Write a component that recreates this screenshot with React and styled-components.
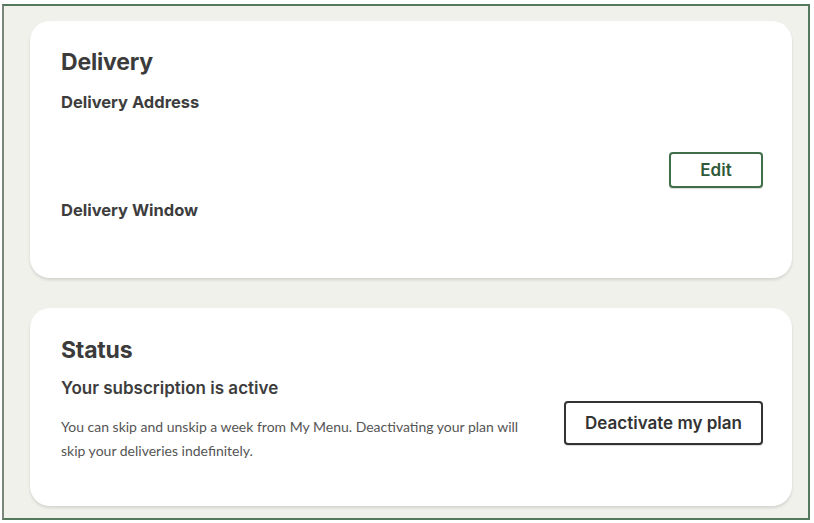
import React from "react";
import styled, { createGlobalStyle } from "styled-components";

const GlobalStyle = createGlobalStyle`
  html, body {
    margin: 0;
    padding: 0;
    background: #ffffff;
  }
  * {
    box-sizing: border-box;
  }
`;

const Frame = styled.div`
  width: 808px;
  height: 516px;
  margin: 4px 0 0 2px;
  border: 2px solid #55795c;
  border-left-color: #7b867d;
  background: #f1f1ec;
  padding: 15px 16px 12px 26px;
  display: flex;
  flex-direction: column;
  gap: 30px;
`;

const Card = styled.section`
  background: #ffffff;
  border-radius: 20px;
  box-shadow: 0 2px 3px rgba(0, 0, 0, 0.12);
  height: ${(p) => p.$height}px;
  padding: ${(p) => p.$padTop}px 29px 0 31px;
  display: flex;
  flex-direction: column;
`;

const Title = styled.h2`
  margin: 0;
  font-family: Inter, "Liberation Sans", sans-serif;
  font-size: 23px;
  line-height: 28px;
  font-weight: 700;
  color: #3b3b3b;
  letter-spacing: -0.2px;
`;

const Label = styled.h3`
  margin: 0;
  font-family: Inter, "Liberation Sans", sans-serif;
  font-size: 16.5px;
  line-height: 20px;
  font-weight: 700;
  color: #3d3d3d;
  letter-spacing: 0;
`;

const Subtitle = styled(Label)`
  font-size: 17px;
  font-weight: 600;
`;

const Body = styled.div`
  display: flex;
  justify-content: space-between;
  align-items: flex-start;
  margin-top: ${(p) => p.$gap}px;
`;

const Column = styled.div`
  display: flex;
  flex-direction: column;
  gap: ${(p) => p.$gap}px;
`;

const Text = styled.p`
  margin: 0;
  max-width: 470px;
  font-family: Lato, "Open Sans", sans-serif;
  font-size: 14px;
  line-height: 24px;
  color: #555555;
`;

const Button = styled.button`
  font-family: Inter, "Liberation Sans", sans-serif;
  font-weight: 600;
  font-size: 17px;
  color: ${(p) => (p.$green ? "#2f5a39" : "#333333")};
  background: #ffffff;
  border: 2px solid ${(p) => (p.$green ? "#3f6e49" : "#333333")};
  border-radius: 4px;
  width: ${(p) => p.$w}px;
  height: ${(p) => p.$h}px;
  margin-top: ${(p) => p.$top || 0}px;
  flex-shrink: 0;
  cursor: pointer;
  box-shadow: 0 1px 1px rgba(0, 0, 0, 0.15);
`;

export default function App() {
  return (
    <>
      <GlobalStyle />
      <Frame>
        <Card $height={257} $padTop={27}>
          <Title>Delivery</Title>
          <Body $gap={16}>
            <Column $gap={88}>
              <Label>Delivery Address</Label>
              <Label>Delivery Window</Label>
            </Column>
            <Button $green $w={94} $h={36} $top={60}>
              Edit
            </Button>
          </Body>
        </Card>
        <Card $height={198} $padTop={28}>
          <Title>Status</Title>
          <Body $gap={14}>
            <Column $gap={17}>
              <Subtitle>Your subscription is active</Subtitle>
              <Text>
                You can skip and unskip a week from My Menu. Deactivating your
                plan will skip your deliveries indefinitely.
              </Text>
            </Column>
            <Button $w={199} $h={44} $top={23}>
              Deactivate my plan
            </Button>
          </Body>
        </Card>
      </Frame>
    </>
  );
}
